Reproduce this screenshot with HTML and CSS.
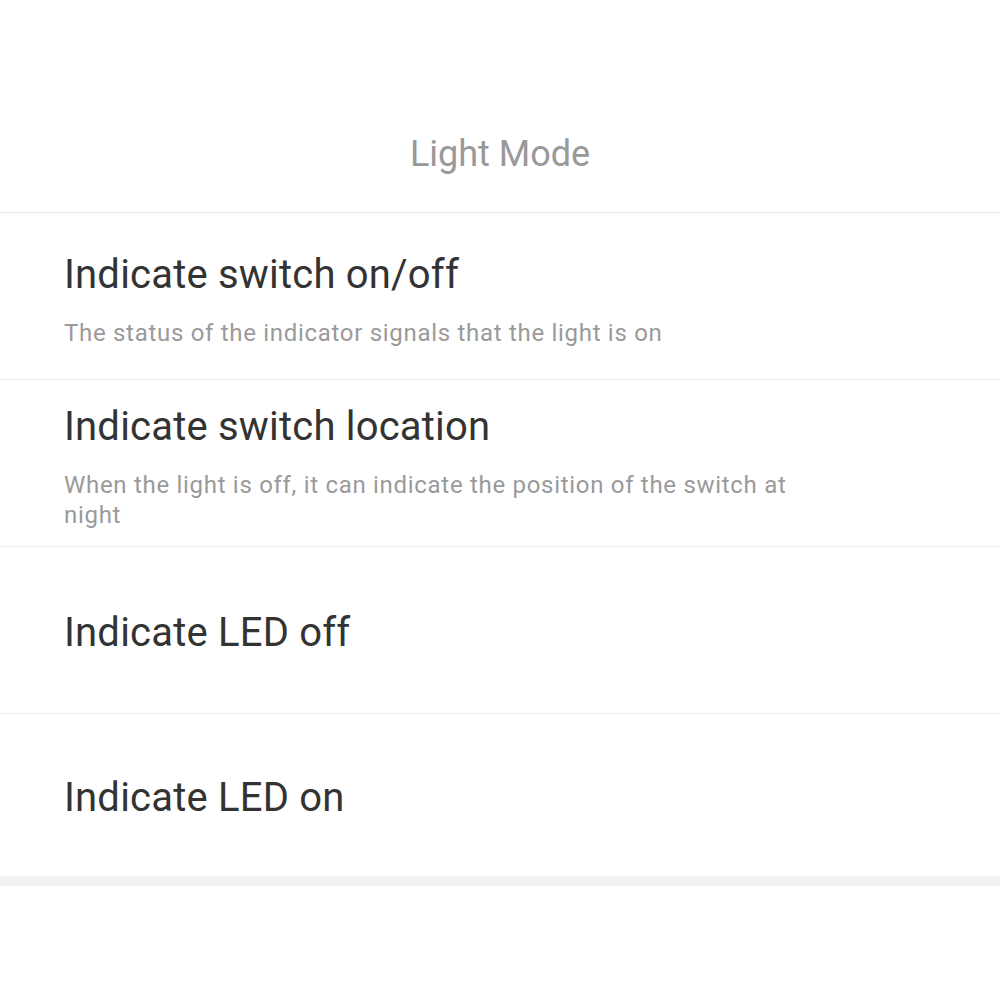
FILE: index.html
```html
<!DOCTYPE html>
<html lang="en">
<head>
<meta charset="utf-8">
<title>Light Mode</title>
<link rel="stylesheet" href="styles.css">
</head>
<body>
<div class="page">
  <header class="header">
    <h1 class="header-title">Light Mode</h1>
  </header>
  <ul class="list">
    <li class="item">
      <div class="item-title">Indicate switch on/off</div>
      <div class="item-desc">The status of the indicator signals that the light is on</div>
    </li>
    <li class="item">
      <div class="item-title">Indicate switch location</div>
      <div class="item-desc">When the light is off, it can indicate the position of the switch at night</div>
    </li>
    <li class="item">
      <div class="item-title">Indicate LED off</div>
    </li>
    <li class="item item-last">
      <div class="item-title">Indicate LED on</div>
    </li>
  </ul>
  <div class="band"></div>
</div>
</body>
</html>
```
FILE: styles.css
```css
html, body {
  margin: 0;
  padding: 0;
  background: #ffffff;
}
body {
  font-family: Roboto, "Noto Sans", "Liberation Sans", sans-serif;
}
.page {
  width: 1000px;
  min-height: 1000px;
  background: #ffffff;
}
.header {
  height: 212px;
  border-bottom: 1px solid #e8e8e8;
  display: flex;
  align-items: flex-start;
  justify-content: center;
}
.header-title {
  margin: 130px 0 0;
  font-size: 36px;
  font-weight: 400;
  line-height: 48px;
  color: #999999;
}
.list {
  list-style: none;
  margin: 0;
  padding: 0;
}
.item {
  box-sizing: border-box;
  height: 167px;
  border-bottom: 1px solid #ececec;
  padding: 5px 64px 0;
  display: flex;
  flex-direction: column;
  justify-content: center;
}
.item-last {
  height: 162px;
  border-bottom: none;
}
.item-title {
  font-size: 40px;
  line-height: 50px;
  letter-spacing: 0.2px;
  color: #333333;
}
.item-desc {
  margin-top: 18px;
  max-width: 760px;
  font-size: 24px;
  line-height: 30px;
  letter-spacing: 0.7px;
  color: #9a9a9a;
}
.band {
  height: 10px;
  background: #f2f2f2;
}
```
